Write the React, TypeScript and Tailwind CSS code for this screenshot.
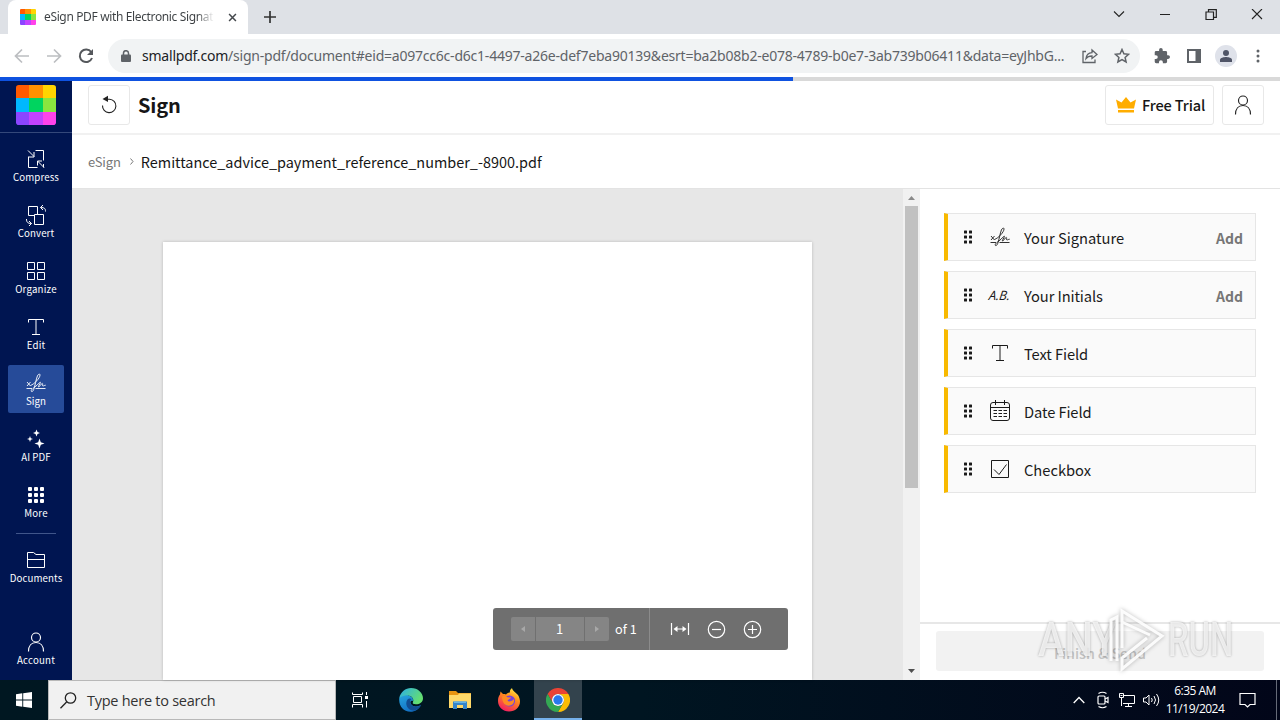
import React from "react";

type SvgProps = { className?: string; children?: React.ReactNode; box?: string; size?: number; w?: number; h?: number; sw?: number };

function Line({ className = "", children, box = "0 0 24 24", size = 24, w, h, sw = 1 }: SvgProps) {
  return (
    <svg
      className={`block shrink-0 ${className}`}
      width={w ?? size}
      height={h ?? size}
      viewBox={box}
      fill="none"
      stroke="currentColor"
      strokeWidth={sw}
    >
      {children}
    </svg>
  );
}

const logoColors = ["#ff5a00", "#ff9100", "#ffd400", "#00b8ff", "#00d45f", "#8ae53f", "#8b45ff", "#c342ff", "#ff42ea"];

function Logo({ size }: { size: number }) {
  return (
    <svg className="block shrink-0 rounded-[7%]" width={size} height={size} viewBox="0 0 39 39" shapeRendering="crispEdges">
      {logoColors.map((c, i) => (
        <rect key={c} x={(i % 3) * 13} y={Math.floor(i / 3) * 13} width="13" height="13" fill={c} />
      ))}
    </svg>
  );
}

function SignatureIcon() {
  return (
    <Line sw={0.9}>
      <path d="M2.500 17.500h5.500M11.500 17.500h10M3 11l3.500 4M6.500 11l-3.500 4" />
      <path d="M6.500 14.500c4-1.500 9.500-7.500 9.500-10.500 0-1.600-1.800-1-2.600 1-1.400 3.500-2.100 9-3.700 13.500-.7 2-2.200 2.800-2.500 1.500-.3-1.700 4.300-4 7-7 1.300-1.500 2.400-2.500 2.200-1.400-.3 1.500-2.700 3.900-1.900 4.400.9.500 2.500-3.500 3.800-3.600 1 0-.4 2.500.6 2.600.8 0 1.300-.7 2.800-.8" />
    </Line>
  );
}

function TextIcon() {
  return (
    <Line>
      <path d="M4.500 7.500v-3h15v3M12 4.500v15M8 19.500h8" />
    </Line>
  );
}

function PersonIcon() {
  return (
    <Line sw={1.150}>
      <circle cx="12" cy="7.500" r="4.500" />
      <path d="M4.500 21.500c0-5.500 3-9 7.500-9s7.500 3.500 7.500 9" />
    </Line>
  );
}

function NavItem({ label, tracking = "tracking-[0.1px]", active = false, children }: { label: string; tracking?: string; active?: boolean; children: React.ReactNode }) {
  return (
    <div className={`flex h-12 w-14 shrink-0 flex-col items-center pt-1.5 text-white ${active ? "rounded-xs bg-[#264b99]" : ""}`}>
      {children}
      <span className={`whitespace-nowrap text-[9.700px] leading-[12px] ${tracking}`}>{label}</span>
    </div>
  );
}

function Chrome() {
  return (
    <header className="shrink-0 font-['Noto_Sans','Open_Sans',sans-serif]">
      <div className="flex h-[34px] bg-[#dee1e6] px-2">
        <div className="flex w-60 items-center rounded-t-lg bg-white pl-3 pr-[11px]">
          <Logo size={16} />
          <span className="ml-2 w-[170px] overflow-hidden whitespace-nowrap bg-linear-to-r from-[#3c4043] from-90% to-transparent bg-clip-text text-[12px] leading-4 tracking-[-0.36px] text-transparent">
            eSign PDF with Electronic Signature
          </span>
          <Line className="ml-auto text-[#45494d]" size={9} box="0 0 10 10" sw={1.700}>
            <path d="M1.200 1.200l7.600 7.600M8.800 1.200L1.200 8.800" />
          </Line>
        </div>
        <Line className="ml-4 mt-[11px] text-[#333]" size={12} box="0 0 12 12" sw={1.700}>
          <path d="M6 0v12M0 6h12" />
        </Line>
        <div className="ml-auto mt-[9px] flex gap-[34px] pr-[9px] text-[#222]">
          <Line className="mt-[2px]" w={12} h={8} box="0 0 12 8" sw={1.100}>
            <path d="M1 0.500l5 5 5-5" />
          </Line>
          <Line size={12} box="0 0 12 12">
            <path d="M1 5.500h10" />
          </Line>
          <Line size={12} box="0 0 12 12" sw={1.200}>
            <path d="M1 3h7.500v7.500H1zM3.500 3V.6h7.800v7.800H8.500" />
          </Line>
          <Line size={12} box="0 0 12 12" sw={1.100}>
            <path d="M1 0l10 10M11 0L1 10" />
          </Line>
        </div>
      </div>
      <div className="flex h-[43px] items-center bg-white pl-[14px] pr-[20px]">
        <div className="flex gap-[16px] text-[#bcbec1]">
          <Line size={16} box="0 0 16 16" sw={1.700}>
            <path d="M15 8H2M8 1.500L1.500 8 8 14.500" />
          </Line>
          <Line size={16} box="0 0 16 16" sw={1.700}>
            <path d="M1 8h13M8 1.500L14.500 8 8 14.500" />
          </Line>
          <Line className="text-[#55585c]" size={16} box="0 0 16 16" sw={2}>
            <path d="M13.200 4A6.300 6.300 0 1 0 14 10" />
            <path d="M15 1v6H9z" fill="currentColor" stroke="none" />
          </Line>
        </div>
        <div className="ml-[14px] flex h-[34px] w-[1032px] items-center rounded-full bg-[#f1f3f4] pl-[13px] pr-[10px]">
          <Line className="text-[#5f6368]" w={10} h={12} box="0 0 10 12" sw={1.500}>
            <rect x="0" y="4.500" width="10" height="7.500" rx="1" fill="currentColor" stroke="none" />
            <path d="M2.500 5V3.200a2.500 2.500 0 0 1 5 0V5" />
          </Line>
          <span className="ml-[11px] w-[930px] whitespace-nowrap text-[14px] leading-5 tracking-[-0.22px] text-[#5f6368]">
            <span className="text-[#202124]">smallpdf.com</span>
            /sign-pdf/document#eid=a097cc6c-d6c1-4497-a26e-def7eba90139&amp;esrt=ba2b08b2-e078-4789-b0e7-3ab739b06411&amp;data=eyJhbG...
          </span>
          <Line className="ml-auto text-[#5f6368]" size={16} box="0 0 16 16" sw={1.300}>
            <path d="M4 3.500H1v11h12v-3" />
            <path d="M4 10.500c.5-4 2.500-5.500 6-5.800V2l5 4.500-5 4V8C7 8 5.500 8.500 4 10.500z" />
          </Line>
          <Line className="ml-4 text-[#5f6368]" size={16} box="0 0 16 16" sw={1.500}>
            <path d="M8 1.500l1.900 4.300 4.700.5-3.500 3.100 1 4.600L8 11.600 3.900 14l1-4.600-3.500-3.100 4.700-.5z" />
          </Line>
        </div>
        <div className="ml-auto flex items-center text-[#5f6368]">
          <svg className="block" width="16" height="16" viewBox="1 1 22 22" fill="currentColor">
            <path d="M20.500 11H19V7a2 2 0 0 0-2-2h-4V3.500a2.500 2.500 0 0 0-5 0V5H4a2 2 0 0 0-2 2v3.800h1.500a2.700 2.700 0 0 1 0 5.400H2V20a2 2 0 0 0 2 2h3.800v-1.500a2.700 2.700 0 0 1 5.400 0V22H17a2 2 0 0 0 2-2v-4h1.500a2.500 2.500 0 0 0 0-5z" />
          </svg>
          <svg className="ml-[17px] block" width="14" height="14" viewBox="0 0 14 14">
            <path fill="currentColor" fillRule="evenodd" d="M0 0h14v14H0zM2 2v10h6.500V2z" />
          </svg>
          <div className="ml-[14px] flex size-[22px] items-center justify-center rounded-full bg-[#dfe2ea]">
            <svg width="12" height="12" viewBox="0 0 12 12" fill="#505567">
              <circle cx="6" cy="3" r="3" />
              <path d="M0 12V9.800C0 7.800 4 7 6 7s6 .8 6 2.800V12z" />
            </svg>
          </div>
          <svg className="ml-[19px] block" width="4" height="14" viewBox="0 0 4 14" fill="currentColor">
            <circle cx="2" cy="2" r="1.500" />
            <circle cx="2" cy="7" r="1.500" />
            <circle cx="2" cy="12" r="1.500" />
          </svg>
        </div>
      </div>
      <div className="h-1 bg-[#d9d9d9]">
        <div className="h-full w-[793px] bg-[#0f52e0]" />
      </div>
    </header>
  );
}

function Sidebar() {
  return (
    <nav className="flex w-[72px] shrink-0 flex-col items-center bg-[#001551]">
      <div className="mt-1">
        <Logo size={40} />
      </div>
      <div className="mt-[7px] h-px w-full shrink-0 bg-[#34487a]" />
      <div className="mt-2 flex flex-col gap-2">
        <NavItem label="Compress">
          <Line>
            <path d="M11.500 3.500h8v10M4.500 9.500v11h9M19.500 17v3.500M4 3.500l6 6M10 5v5H5M20 20.500l-6.500-6.500M13.500 18.500V14H18" />
          </Line>
        </NavItem>
        <NavItem label="Convert">
          <Line>
            <path d="M10.500 12.500h-6v-9h9v7.500M10.500 11.500h9v10h-9zM21.500 8.500c0-3-1-4-5-4M19 2l-2.500 2.500L19 7M2.500 16c0 3 1 4.500 5 4.500M5 18l2.500 2.500L5 23" />
          </Line>
        </NavItem>
        <NavItem label="Organize" tracking="tracking-[0.200px]">
          <Line>
            <path d="M3.500 3.500h7v7h-7zM13.500 3.500h7v7h-7zM3.500 13.500h7v7h-7zM13.500 13.500h7v7h-7z" />
          </Line>
        </NavItem>
        <NavItem label="Edit"><TextIcon /></NavItem>
        <NavItem label="Sign" active><SignatureIcon /></NavItem>
        <NavItem label="AI PDF">
          <svg className="block" width="24" height="24" viewBox="0 0 24 24" fill="currentColor">
            <path d="M12.500 2.500l1 2.500 2.500 1-2.500 1-1 2.500-1-2.500-2.500-1 2.500-1zM6 9l.8 2.200 2.200.8-2.200.8L6 15l-.8-2.200-2.200-.8 2.200-.8zM15.500 11.500l1.300 3.700 3.700 1.300-3.700 1.300-1.300 3.700-1.300-3.700-3.700-1.300 3.700-1.300z" />
          </svg>
        </NavItem>
        <NavItem label="More" tracking="tracking-[0.200px]">
          <svg className="block" width="24" height="24" viewBox="0 0 24 24" fill="currentColor">
            {[4, 10, 16].map((y) => [4, 10, 16].map((x) => <rect key={`${x}-${y}`} x={x} y={y} width="4" height="4" rx="1" />))}
          </svg>
        </NavItem>
      </div>
      <div className="mt-2 h-px w-10 shrink-0 bg-[#40558a]" />
      <div className="mt-2">
        <NavItem label="Documents">
          <Line>
            <path d="M3.500 4.500h6l2.500 2h8.500v13h-17zM3.500 11.500h17" />
          </Line>
        </NavItem>
      </div>
      <div className="mt-auto pb-2">
        <NavItem label="Account" tracking="tracking-[0.200px]"><PersonIcon /></NavItem>
      </div>
    </nav>
  );
}

function TopBar() {
  return (
    <div className="flex h-[54px] shrink-0 border-b-2 border-[#f1f1f1] pl-4 pr-4 pt-1">
      <div className="flex h-10 w-[42px] items-center justify-center rounded-[3px] border border-[#e8e8e8]">
        <Line size={20} box="0 0 20 20" className="text-[#222]" sw={1.100}>
          <path d="M8 4.200h2.500A6.700 6.700 0 1 1 3.500 10.500" />
          <path d="M9 .8v6.200L3.500 4z" fill="currentColor" stroke="none" />
        </Line>
      </div>
      <h1 className="ml-2 text-[20px] font-bold leading-[40px] tracking-[-0.200px] text-[#161616]">Sign</h1>
      <div className="ml-auto flex h-10 w-[109px] items-center rounded-[3px] border border-[#e8e8e8] pl-[10px]">
        <svg className="block" width="20" height="16" viewBox="0 0 20 16" fill="#ffad00">
          <path d="M0 2.500L5.500 5.500 10 0l4.500 5.500L20 2.500 18 11.500H2zM2 13h16v2.500H2z" />
        </svg>
        <span className="ml-1.5 whitespace-nowrap text-[14.600px] font-medium tracking-[-0.150px] text-[#161616]">Free Trial</span>
      </div>
      <div className="ml-2 flex h-10 w-[42px] items-center justify-center rounded-[3px] border border-[#e8e8e8] text-[#222]">
        <PersonIcon />
      </div>
    </div>
  );
}

function Viewer() {
  return (
    <div className="relative flex w-[848px] shrink-0 bg-[#e7e7e7]">
      <div className="flex flex-1 pl-[91px] pt-[53px]">
        <div className="w-[649px] bg-white shadow-[0_0_3px_rgba(0,0,0,0.200)]" />
      </div>
      <div className="flex w-[17px] flex-col items-center bg-[#f1f1f1] text-[#505050]">
        <svg className="mt-[7px] block" width="7" height="4" viewBox="0 0 7 4"><path d="M0 4l3.500-4L7 4z" fill="#8a8a8a" /></svg>
        <div className="mt-[6px] h-[282px] w-[13px] bg-[#c1c1c1]" />
        <svg className="mb-[7px] mt-auto block" width="7" height="4" viewBox="0 0 7 4"><path d="M0 0l3.500 4L7 0z" fill="currentColor" /></svg>
      </div>
      <div className="absolute bottom-[30px] left-[421px] flex h-[42px] w-[295px] items-center rounded-[3px] bg-[#6f6f6f] text-white">
        <div className="ml-[18px] flex h-6 w-[98px] gap-px overflow-hidden rounded-[2px] bg-[#707070]">
          <div className="flex w-6 items-center justify-center bg-[#858585]">
            <svg width="4" height="6" viewBox="0 0 4 6"><path d="M4 0v6L0 3z" fill="#a8a8a8" /></svg>
          </div>
          <div className="flex-1 bg-[#858585] pr-px text-center text-[13px] leading-6">1</div>
          <div className="flex w-6 items-center justify-center bg-[#858585]">
            <svg width="4" height="6" viewBox="0 0 4 6"><path d="M0 0v6l4-3z" fill="#a8a8a8" /></svg>
          </div>
        </div>
        <span className="ml-1.5 w-[34px] whitespace-nowrap text-[12.700px]">of 1</span>
        <div className="h-full w-px bg-[#8b8b8b]" />
        <Line className="ml-[20px]" w={20} h={16} box="0 0 20 16" sw={1.200}>
          <path d="M1.500 2v12M18.500 2v12M5 8h10" />
          <path d="M3.500 8l4-3v6zM16.500 8l-4-3v6z" fill="currentColor" stroke="none" />
        </Line>
        <Line className="ml-[17px]" size={19} box="0 0 19 19" sw={1.200}>
          <circle cx="9.500" cy="9.500" r="8.200" /><path d="M5 9.500h9" />
        </Line>
        <Line className="ml-[17px]" size={19} box="0 0 19 19" sw={1.200}>
          <circle cx="9.500" cy="9.500" r="8.200" /><path d="M5 9.500h9M9.500 5v9" />
        </Line>
      </div>
    </div>
  );
}

function Field({ label, add = false, tracking = "", children }: { label: string; add?: boolean; tracking?: string; children: React.ReactNode }) {
  return (
    <div className="flex h-12 items-center border border-l-4 border-[#e6e6e6] border-l-[#f8b900] bg-[#fafafa] pr-3 text-[#1b1b1b]">
      <svg className="ml-[15px] block" width="10" height="14" viewBox="0 0 10 14" fill="currentColor">
        {[0.500, 5.500, 10.500].map((y) => [1, 6].map((x) => <rect key={`${x}-${y}`} x={x} y={y} width="3" height="3" rx=".5" />))}
      </svg>
      <div className="ml-[15px] flex w-6 justify-center">{children}</div>
      <span className={`ml-3 whitespace-nowrap pt-px text-[14.700px] leading-6 ${tracking}`}>{label}</span>
      {add && <span className="ml-auto pt-px text-[14px] font-bold leading-6 text-[#767676]">Add</span>}
    </div>
  );
}

function Watermark() {
  return (
    <div className="absolute bottom-[8px] left-[118px] flex h-[64px] w-[197px] items-center justify-between">
      <span className="w-[70px] origin-left scale-x-[0.830] font-['Roboto',sans-serif] text-[48px] font-medium leading-[64px] text-white/75 [text-shadow:0_0_3px_rgba(0,0,0,0.330)]">ANY</span>
      <svg className="absolute left-[69px] top-0 block drop-shadow-[0_0_2px_rgba(0,0,0,0.300)]" width="60" height="64" viewBox="0 0 60 64" fill="none" stroke="#fff" strokeOpacity=".9" strokeWidth="3">
        <path d="M4 53V12l6-3v44M15 40V3l40 25-40 33V50l25-20M15 14l28 13" />
      </svg>
      <span className="w-[67px] origin-left scale-x-[0.680] font-['Roboto',sans-serif] text-[48px] font-medium leading-[64px] text-white/75 [text-shadow:0_0_3px_rgba(0,0,0,0.330)]">RUN</span>
    </div>
  );
}

function Fields() {
  return (
    <aside className="relative flex flex-1 flex-col">
      <div className="flex flex-col gap-2.5 px-6 pt-6">
        <Field label="Your Signature" add><SignatureIcon /></Field>
        <Field label="Your Initials" add tracking="tracking-[-0.100px]">
          <span className="-skew-x-6 whitespace-nowrap font-['Open_Sans',sans-serif] text-[13px] italic leading-5 tracking-[-0.100px]">A.B.</span>
        </Field>
        <Field label="Text Field" tracking="tracking-[-0.100px]"><TextIcon /></Field>
        <Field label="Date Field" tracking="tracking-[-0.100px]">
          <Line>
            <rect x="2.500" y="3.500" width="19" height="18" rx="2.500" />
            <path d="M7.500 1v5M16.500 1v5M2.500 8.500h19M5.500 11.500h3.500M10.500 11.500h3.500M15.500 11.500h3.500M5.500 14.500h3.500M10.500 14.500h3.500M15.500 14.500h3.500M5.500 17.500h3.500M10.500 17.500h3.500M15.500 17.500h3.500" />
          </Line>
        </Field>
        <Field label="Checkbox">
          <Line>
            <path d="M3.500 3.500h17v17h-17zM6 12.500l5 5 7.500-10" />
          </Line>
        </Field>
      </div>
      <div className="mt-auto h-[58px] border-t-2 border-[#e7e7e7] px-4 pt-[7px]">
        <div className="h-10 rounded-[3px] bg-[#f2f2f2] pt-0.5 text-center text-[14.300px] font-medium leading-10 text-[#c2c2c2]">Finish &amp; Send</div>
      </div>
      <Watermark />
    </aside>
  );
}

function EdgeIcon() {
  return (
    <svg className="block" width="24" height="24" viewBox="0 0 24 24">
      <defs>
        <linearGradient id="edgeTop" x1="0" y1="0" x2="1" y2=".5"><stop stopColor="#2baee8" /><stop offset="1" stopColor="#65df70" /></linearGradient>
        <linearGradient id="edgeLow" x1="0" y1="0" x2=".5" y2="1"><stop stopColor="#27a5df" /><stop offset="1" stopColor="#1270c4" /></linearGradient>
      </defs>
      <path fill="url(#edgeLow)" d="M.3 10C1.500 7.500 5 6 8.500 7c4 1 6 3.500 5.500 6-2-.8-3.500 1-2 3 2.500 3.500 7 2.800 10 .8-2 4.500-6 7-10.500 7C4 23.800-.6 17.500.3 10z" />
      <path fill="url(#edgeTop)" d="M.3 10C1.500 4 6.500 0 12 0c7 0 12 5 12 10.300 0 4-3.500 6-7 6-2.500 0-4-1-3-2.300C16 9.500 9 3.500.3 10z" />
      <path fill="#124d91" d="M8.500 11.500c-3.500 5 1 12 7 11 2.700-.6 5-2.500 6.500-5-4 2-9.500 1.500-10.700-2.500-.5-1.800.2-3.200 1.400-4-1.500-1-3.100-.7-4.200.5z" />
    </svg>
  );
}

function FirefoxIcon() {
  return (
    <svg className="block" width="24" height="24" viewBox="0 0 24 24">
      <defs>
        <linearGradient id="fox" x1=".8" y1="0" x2=".3" y2="1"><stop stopColor="#fff047" /><stop offset=".4" stopColor="#ff8e1c" /><stop offset="1" stopColor="#f31a63" /></linearGradient>
      </defs>
      <path fill="url(#fox)" d="M3.500 3.500L6 6c1 0 2.400 0 3 .4C10 5 12 4.500 13 4.500 12.500 3 13.500 1 15 .3c.5 2.700 3.500 4 5.500 6.200 1 .7 2.500 4 2.500 7 0 6-5 10-11 10S1 19 1 13c0-3 .7-5 2-6.500z" />
      <circle cx="12.500" cy="13" r="5.600" fill="#7542dc" />
      <path fill="#ff8b22" d="M5 8.500c2-1.300 4-.5 5.500.8l3.500.2c-.2 1.500-2.500 1.500-3.500 3 1 2 5 .5 6.500-1.500.7 4-2 7-5.500 6.700C7 17.500 5 13 5 8.500z" />
    </svg>
  );
}

function ChromeIcon() {
  return (
    <svg className="block" width="24" height="24" viewBox="0 0 24 24">
      <path fill="#ea4335" d="M1.600 6A12 12 0 0 1 22.400 6H12a6 6 0 0 0-5.200 9z" />
      <path fill="#fbbc05" d="M22.400 6A12 12 0 0 1 12 24l5.200-9A6 6 0 0 0 12 6z" />
      <path fill="#34a853" d="M12 24A12 12 0 0 1 1.600 6l5.200 9a6 6 0 0 0 10.400 0z" />
      <circle cx="12" cy="12" r="6" fill="#fff" />
      <circle cx="12" cy="12" r="4.700" fill="#2879ee" />
    </svg>
  );
}

function Taskbar() {
  return (
    <footer className="flex h-10 shrink-0 bg-linear-to-r from-[#001721] via-[#001521] to-[#020619] font-['Open_Sans','Noto_Sans',sans-serif] text-white">
      <div className="flex w-12 items-center justify-center">
        <svg width="16" height="16" viewBox="0 0 16 16" fill="#fff">
          <path d="M0 2.200L6.300 1.300v6.200H0zM7.200 1.200L16 0v7.500H7.200zM0 8.400h6.300v6.300L0 13.800zM7.200 8.400H16V16l-8.800-1.200z" />
        </svg>
      </div>
      <div className="flex w-72 items-center border border-[#b8b8b8] bg-[#f1f1f1] pl-[11px] text-[#333]">
        <Line className="text-[#222]" w={17} h={17} box="0 0 17 17" sw={1.300}>
          <circle cx="10.500" cy="6" r="5.200" /><path d="M6.600 10L.5 16.300" />
        </Line>
        <span className="ml-[10px] whitespace-nowrap pt-px text-[14.500px] leading-5 tracking-[-0.260px]">Type here to search</span>
      </div>
      <div className="flex w-12 items-center justify-center">
        <Line size={16} box="0 0 16 16">
          <path d="M.5.500v2h10v-2M.500 15.500v-3h10v3M1.500 4.500h8v6h-8zM14.500 0v3M14.500 9v6.500" />
          <rect x="13" y="4" width="3" height="3" fill="currentColor" stroke="none" />
        </Line>
      </div>
      <div className="flex w-[52px] items-center justify-center pl-0.5"><EdgeIcon /></div>
      <div className="flex w-12 items-center justify-center">
        <svg width="22" height="18" viewBox="0 0 22 18">
          <path fill="#e89410" d="M0 0h7l2 2h13v5H0z" />
          <path fill="#ffd969" d="M0 4h9l1-1.500h12V17H0z" />
          <path fill="#3686ca" d="M4 18v-7.500h14V18h-4v-4H8v4z" />
          <path fill="#65b5e8" d="M5 10.500h12v1.500H5z" />
        </svg>
      </div>
      <div className="flex w-[50px] items-center justify-center"><FirefoxIcon /></div>
      <div className="flex w-12 items-center justify-center border-b-2 border-[#76b1eb] bg-[#33434d] pt-0.5"><ChromeIcon /></div>
      <div className="ml-auto flex items-center">
        <Line w={12} h={8} box="0 0 12 8" sw={1.300}><path d="M.7 7L6 1.500 11.300 7" /></Line>
        <Line className="ml-[12px]" w={12} h={18} box="0 0 12 18" sw={1.200}>
          <rect x="1" y="5" width="7" height="8" rx="1" /><path d="M8 8l3-1.500v5L8 10M1.500 2.500q4-2.500 8 0M1.500 15.500q4 2.500 8 0" />
        </Line>
        <Line className="ml-[9px]" w={18} h={14} box="0 0 18 14">
          <path d="M5 2.500h11.500v8H5M1.500.5h4v4h-4zM3.500 4.500v8.500M10.500 10.500v3M7 13.500h7M2.500 2.500h2" />
        </Line>
        <Line className="ml-[6px]" w={18} h={14} box="0 0 18 14">
          <path d="M1.500 5H4l3-3v10L4 9H1.500zM9.500 5q1.500 2 0 4M12 3q3 4 0 8M14.500 1q4.500 6 0 12" />
        </Line>
        <div className="ml-[3px] w-[64px] whitespace-nowrap text-center text-[12px] leading-[18px] tracking-[-0.5px]">
          <div>6:35 AM</div>
          <div>11/19/2024</div>
        </div>
        <Line className="ml-[12px] mr-[20px]" w={17} h={17} box="0 0 17 17" sw={1.200}>
          <path d="M1 1.500h15v11h-5L8.500 15 6 12.500H1z" />
        </Line>
        <div className="mr-[3px] h-10 w-px bg-[#666b78]" />
      </div>
    </footer>
  );
}

export default function App() {
  return (
    <div className="flex h-[720px] w-[1280px] flex-col overflow-hidden bg-white font-['Noto_Sans_CJK_SC',sans-serif]">
      <Chrome />
      <div className="flex min-h-0 flex-1">
        <Sidebar />
        <main className="flex min-w-0 flex-1 flex-col">
          <TopBar />
          <div className="flex h-[53px] shrink-0 items-center pl-4">
            <span className="text-[13px] tracking-[-0.150px] text-[#777]">eSign</span>
            <Line className="ml-[9px] text-[#777]" w={4} h={7} box="0 0 4 7"><path d="M.5.500l2.500 3-2.500 3" /></Line>
            <span className="ml-[7px] whitespace-nowrap text-[14.450px] text-[#161616]">Remittance_advice_payment_reference_number_-8900.pdf</span>
          </div>
          <div className="flex min-h-0 flex-1 border-t border-[#e3e3e3]">
            <Viewer />
            <Fields />
          </div>
        </main>
      </div>
      <Taskbar />
    </div>
  );
}
